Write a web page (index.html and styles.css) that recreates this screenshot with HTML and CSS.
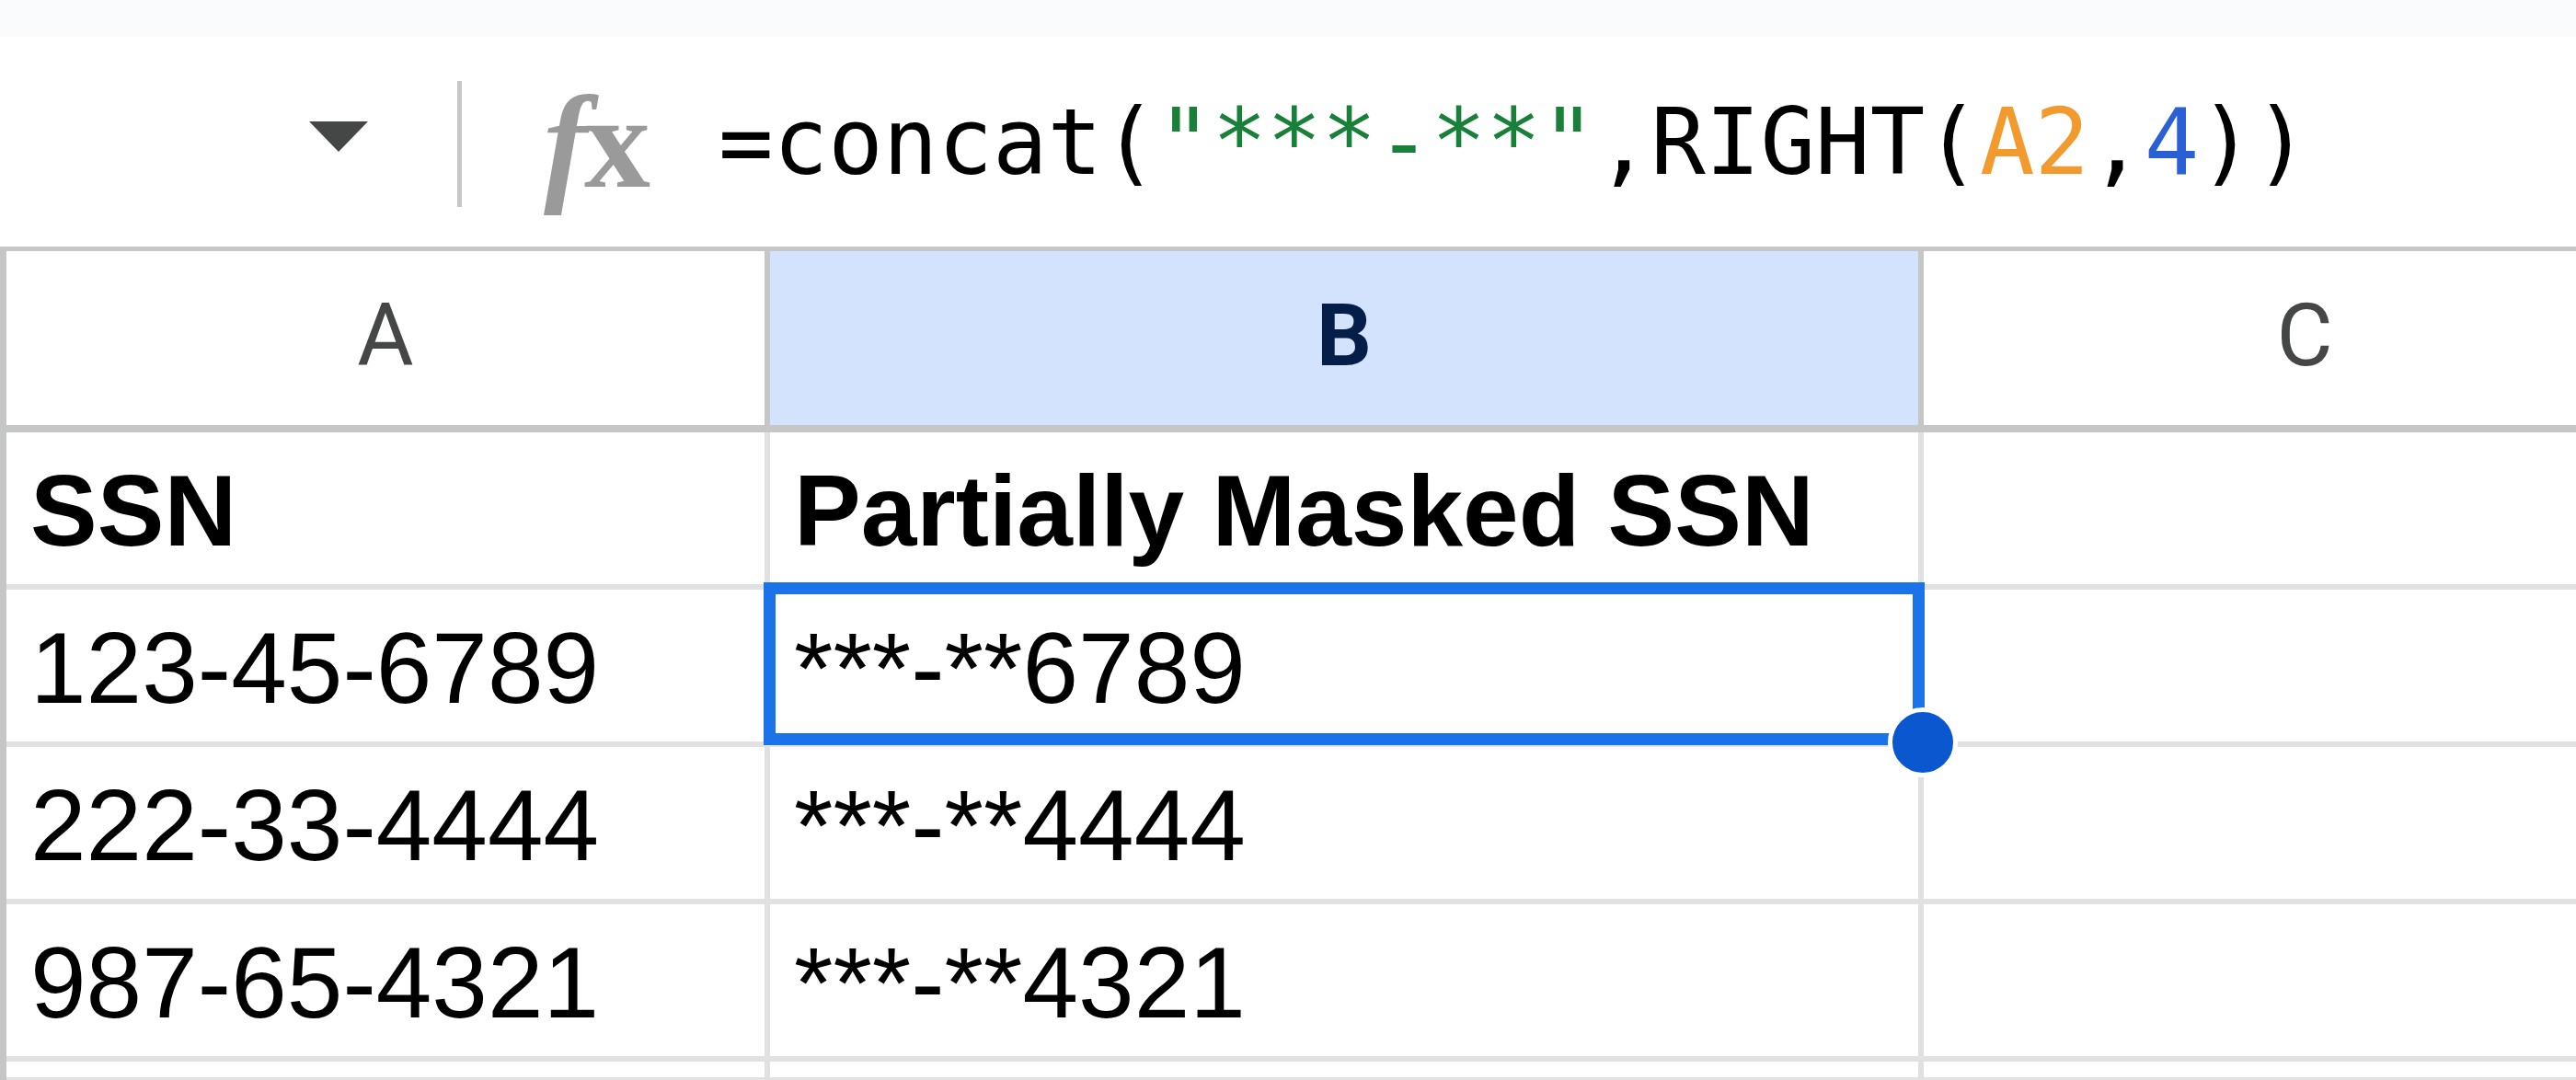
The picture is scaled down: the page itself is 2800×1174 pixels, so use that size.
FILE: index.html
```html
<!DOCTYPE html>
<html>
<head>
<meta charset="utf-8">
<title>Sheet</title>
<link rel="stylesheet" href="styles.css">
</head>
<body>
<div class="topband"></div>
<div class="fbar">
  <div class="namebox">
    <svg class="caret" width="64" height="33" viewBox="0 0 64 33"><path d="M0 0H64L32 33Z" fill="#444746"/></svg>
  </div>
  <div class="sep"></div>
  <div class="fx"><span class="fx-f">f</span><span class="fx-x">x</span></div>
  <div class="formula">=concat(<span class="str">"***-**"</span>,RIGHT(<span class="ref">A2</span>,<span class="num">4</span>))</div>
</div>
<div class="grid">
  <div class="stub"></div>
  <div class="ch">A</div>
  <div class="ch sel">B</div>
  <div class="ch last">C</div>

  <div class="stub"></div>
  <div class="cell bold">SSN</div>
  <div class="cell bold">Partially Masked SSN</div>
  <div class="cell last"></div>

  <div class="stub"></div>
  <div class="cell">123-45-6789</div>
  <div class="cell active">***-**6789<div class="selbox"></div><div class="handle"></div></div>
  <div class="cell last"></div>

  <div class="stub"></div>
  <div class="cell">222-33-4444</div>
  <div class="cell">***-**4444</div>
  <div class="cell last"></div>

  <div class="stub"></div>
  <div class="cell">987-65-4321</div>
  <div class="cell">***-**4321</div>
  <div class="cell last"></div>

  <div class="stub"></div>
  <div class="cell"></div>
  <div class="cell"></div>
  <div class="cell last"></div>
</div>
</body>
</html>
```

FILE: styles.css
```css
html, body {
  margin: 0;
  padding: 0;
  background: #ffffff;
}
body {
  width: 2800px;
  height: 1174px;
  overflow: hidden;
  font-family: "Liberation Sans", Arial, sans-serif;
}
.topband {
  height: 40px;
  background: #f9fbfd;
}
.fbar {
  height: 228px;
  display: flex;
  align-items: center;
  background: #ffffff;
}
.namebox {
  width: 400px;
  display: flex;
  justify-content: flex-end;
  align-items: center;
}
.caret {
  display: block;
  margin-bottom: 11px;
}
.sep {
  width: 5px;
  height: 137px;
  margin-left: 97px;
  margin-top: 5px;
  background: #c4c7c5;
}
.fx {
  width: 120px;
  margin-left: 89px;
  font-family: "Liberation Serif", "Times New Roman", serif;
  font-size: 144px;
  font-weight: bold;
  color: #9a9a9a;
  white-space: nowrap;
}
.fx-f {
  font-style: italic;
}
.fx-x {
  font-style: normal;
  margin-left: -4px;
}
.formula {
  margin-left: 70px;
  font-family: "DejaVu Sans Mono", monospace;
  font-size: 99px;
  color: #000000;
  white-space: pre;
}
.str { color: #188038; }
.ref { color: #f29a2e; }
.num { color: #2a5fd6; }

.grid {
  display: grid;
  grid-template-columns: 7px 830px 1254px 828px;
  grid-template-rows: 197px 171px 171px 171px 171px 1fr;
  border-top: 5px solid #c4c7c5;
  height: 906px;
  width: 2919px;
  box-sizing: border-box;
}
.stub {
  background: #c4c7c5;
}
.ch {
  box-sizing: border-box;
  border-right: 6px solid #c4c7c5;
  border-bottom: 8px solid #c4c7c5;
  display: flex;
  align-items: center;
  justify-content: center;
  padding-bottom: 5px;
  font-family: Roboto, "Liberation Sans", sans-serif;
  font-size: 94px;
  color: #444746;
  background: #ffffff;
}
.ch.sel {
  background: #d3e3fd;
  color: #041e49;
  font-weight: bold;
}
.cell {
  box-sizing: border-box;
  border-right: 6px solid #e1e1e1;
  border-bottom: 6px solid #e1e1e1;
  display: flex;
  align-items: flex-end;
  padding: 0 26px 17px 26px;
  font-size: 109px;
  line-height: normal;
  color: #000000;
  white-space: nowrap;
}
.last {
  border-right: none;
}
.bold {
  font-weight: bold;
}
.active {
  position: relative;
}
.selbox {
  position: absolute;
  left: -7px;
  top: -8px;
  right: -7px;
  bottom: -4px;
  border: 13px solid #1a73e8;
}
.handle {
  position: absolute;
  right: -43px;
  bottom: -39px;
  width: 66px;
  height: 66px;
  border-radius: 50%;
  background: #0b57d0;
  border: 5px solid #ffffff;
}
```
